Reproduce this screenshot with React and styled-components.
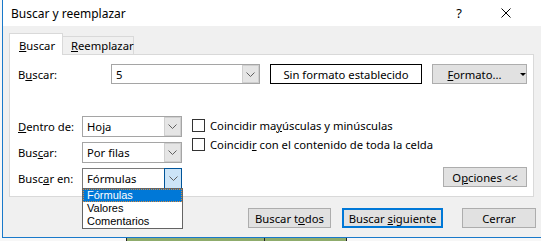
import React from "react";
import styled, { createGlobalStyle } from "styled-components";

const Global = createGlobalStyle`
  body {
    margin: 0;
    background: #fff;
    font-family: "Noto Sans", "Open Sans", sans-serif;
    font-size: 11.25px;
    color: #000;
  }
`;

const Screen = styled.div`
  width: 541px;
  height: 241px;
  overflow: hidden;
  background: #f7f7f7;
`;

const Dialog = styled.div`
  margin-left: 2px;
  width: 539px;
  height: 238px;
  box-sizing: border-box;
  border-left: 1px solid #1979ca;
  border-bottom: 1px solid #1979ca;
  background: #f0f0f0;
  display: flex;
  flex-direction: column;
`;

const TitleBar = styled.div`
  height: 26px;
  flex: none;
  background: #fff;
  display: flex;
  align-items: center;
  padding-left: 8px;
  font-size: 12px;
`;

const Title = styled.span`
  flex: 1;
`;

const TitleIcon = styled.span`
  width: ${(p) => p.$w}px;
  display: flex;
  justify-content: center;
  align-items: center;
  font-size: 13px;
`;

const Tabs = styled.div`
  display: flex;
  align-items: flex-end;
  margin-top: 7px;
  padding-left: 6px;
  position: relative;
  z-index: 2;
`;

const Tab = styled.div`
  box-sizing: border-box;
  height: ${(p) => (p.$active ? 22 : 19)}px;
  width: ${(p) => p.$w}px;
  padding-left: ${(p) => (p.$active ? 9 : 8)}px;
  background: ${(p) => (p.$active ? "#fff" : "#f0f0f0")};
  border: 1px solid #d9d9d9;
  border-bottom: ${(p) => (p.$active ? "none" : "1px solid #d9d9d9")};
  border-left: ${(p) => (p.$active ? "1px solid #d9d9d9" : "none")};
  display: flex;
  align-items: center;
  white-space: nowrap;
  padding-top: ${(p) => (p.$active ? 1 : 0)}px;
`;

const Panel = styled.div`
  margin: -1px 0 0 6px;
  width: 525px;
  height: 143px;
  box-sizing: border-box;
  border: 1px solid #d9d9d9;
  background: #fff;
  padding: 9px 6px 0 8px;
  position: relative;
  z-index: 1;
`;

const TopRow = styled.div`
  display: flex;
  align-items: center;
  height: 20px;
`;

const Label = styled.span`
  width: ${(p) => p.$w}px;
  flex: none;
`;

const Combo = styled.div`
  position: relative;
  display: flex;
  flex: none;
  width: ${(p) => p.$w}px;
  height: ${(p) => p.$h}px;
  box-sizing: border-box;
  border: 1px solid ${(p) => (p.$focus ? "#7a7a7a" : "#a5a5a5")};
  background: #fff;
`;

const ComboValue = styled.span`
  flex: 1;
  display: flex;
  align-items: center;
  padding-left: 4px;
`;

const ComboArrow = styled.span`
  box-sizing: border-box;
  display: flex;
  align-items: center;
  justify-content: center;
  background: ${(p) => (p.$focus ? "#cce4f7" : "#e5e5e5")};
  border: 1px solid ${(p) => (p.$focus ? "#005499" : "#cfcfcf")};
  margin: ${(p) => (p.$focus ? "-1px -1px -1px 0" : "0")};
  width: ${(p) => (p.$focus ? 18 : 17)}px;
`;

const FormatBox = styled.div`
  margin-left: 10px;
  width: 152px;
  height: 20px;
  box-sizing: border-box;
  border: 1px solid #000;
  display: flex;
  align-items: center;
  justify-content: center;
`;

const Btn = styled.button`
  flex: none;
  width: ${(p) => p.$w}px;
  height: 20px;
  margin-left: ${(p) => p.$ml || 0}px;
  box-sizing: border-box;
  border: ${(p) => (p.$primary ? "2px solid #0078d7" : "1px solid #adadad")};
  background: #e1e1e1;
  font: inherit;
  color: #000;
  padding: 0;
  display: flex;
  align-items: center;
  justify-content: center;
  white-space: nowrap;
`;

const Caret = styled.span`
  width: 0;
  height: 0;
  border-left: 3px solid transparent;
  border-right: 3px solid transparent;
  border-top: 3px solid #000;
  margin-left: 18px;
`;

const U = styled.span`
  text-decoration: underline;
  text-underline-offset: 1px;
`;

const Lower = styled.div`
  display: flex;
  margin-top: 32px;
  height: 72px;
`;

const Fields = styled.div`
  display: flex;
  flex-direction: column;
  gap: 5px;
`;

const FieldRow = styled.div`
  display: flex;
  align-items: center;
`;

const Checks = styled.div`
  display: flex;
  flex-direction: column;
  gap: 6px;
  margin: 3px 0 0 10px;
  flex: 1;
`;

const CheckRow = styled.label`
  display: flex;
  align-items: center;
  gap: 5px;
  height: 13px;
`;

const Box = styled.span`
  width: 13px;
  height: 13px;
  box-sizing: border-box;
  border: 1px solid #333;
  background: #fff;
  flex: none;
`;

const OptionsBtn = styled(Btn)`
  align-self: flex-end;
  margin-bottom: 1px;
`;

const Menu = styled.div`
  position: absolute;
  top: 100%;
  left: -1px;
  width: 101px;
  box-sizing: border-box;
  border: 1px solid #646464;
  background: #fff;
  z-index: 5;
  font-family: "Liberation Sans", Arial, sans-serif;
  font-size: 11px;
`;

const MenuItem = styled.div`
  height: 13px;
  line-height: 11px;
  padding-left: 3px;
  box-sizing: border-box;
  background: ${(p) => (p.$sel ? "#0078d7" : "transparent")};
  color: ${(p) => (p.$sel ? "#fff" : "#000")};
  border: 1px dotted ${(p) => (p.$sel ? "#d88a3c" : "transparent")};
`;

const Footer = styled.div`
  display: flex;
  margin-top: 11px;
  padding-left: 245px;
`;

const Sheet = styled.div`
  display: flex;
  height: 3px;
`;

const Cell = styled.div`
  width: ${(p) => p.$w}px;
  background: ${(p) => p.$bg};
  border-right: ${(p) => (p.$line ? "1px solid #222" : "none")};
`;

const Chevron = () => (
  <svg width="9" height="5" viewBox="0 0 9 5">
    <polyline points="0.5,0.5 4.5,4.5 8.5,0.5" fill="none" stroke="#606060" strokeWidth="1" />
  </svg>
);

const Close = () => (
  <svg width="10" height="10" viewBox="0 0 10 10">
    <path d="M0.5 0.5L9.5 9.5M9.5 0.5L0.5 9.5" stroke="#000" strokeWidth="1" />
  </svg>
);

const Select = ({ label, value, focus, children }) => (
  <FieldRow>
    <Label $w={64}>{label}</Label>
    <Combo $w={100} $h={21} $focus={focus}>
      <ComboValue>{value}</ComboValue>
      <ComboArrow $focus={focus}>
        <Chevron />
      </ComboArrow>
      {children}
    </Combo>
  </FieldRow>
);

export default function App() {
  return (
    <Screen>
      <Global />
      <Dialog>
        <TitleBar>
          <Title>Buscar y reemplazar</Title>
          <TitleIcon $w={14}>?</TitleIcon>
          <TitleIcon $w={35} />
          <TitleIcon $w={10}>
            <Close />
          </TitleIcon>
          <TitleIcon $w={30} />
        </TitleBar>

        <Tabs>
          <Tab $active $w={54}>
            <span><U>B</U>uscar</span>
          </Tab>
          <Tab $w={71}>
            <span><U>R</U>eemplazar</span>
          </Tab>
        </Tabs>

        <Panel>
          <TopRow>
            <Label $w={93}>B<U>u</U>scar:</Label>
            <Combo $w={149} $h={20}>
              <ComboValue>5</ComboValue>
              <ComboArrow>
                <Chevron />
              </ComboArrow>
            </Combo>
            <FormatBox>Sin formato establecido</FormatBox>
            <Btn $w={95} $ml={10}>
              <span style={{ marginLeft: 14 }}><U>F</U>ormato...</span>
              <Caret />
            </Btn>
          </TopRow>

          <Lower>
            <Fields>
              <Select label={<><U>D</U>entro de:</>} value="Hoja" />
              <Select label={<>Bus<U>c</U>ar:</>} value="Por filas" />
              <Select label={<>Busc<U>a</U>r en:</>} value="Fórmulas" focus>
                <Menu>
                  <MenuItem $sel>Fórmulas</MenuItem>
                  <MenuItem>Valores</MenuItem>
                  <MenuItem>Comentarios</MenuItem>
                </Menu>
              </Select>
            </Fields>
            <Checks>
              <CheckRow>
                <Box />
                <span>Coincidir ma<U>y</U>úsculas y minúsculas</span>
              </CheckRow>
              <CheckRow>
                <Box />
                <span>Coincidi<U>r</U> con el contenido de toda la celda</span>
              </CheckRow>
            </Checks>
            <OptionsBtn $w={84}>
              <span>O<U>p</U>ciones &lt;&lt;</span>
            </OptionsBtn>
          </Lower>
        </Panel>

        <Footer>
          <Btn $w={83}>
            <span>Buscar t<U>o</U>dos</span>
          </Btn>
          <Btn $w={101} $ml={11} $primary>
            <span>Buscar <U>s</U>iguiente</span>
          </Btn>
          <Btn $w={74} $ml={19}>
            <span>Cerrar</span>
          </Btn>
        </Footer>
      </Dialog>
      <Sheet>
        <Cell $w={126} $bg="#f7f7f7" $line />
        <Cell $w={138} $bg="#8fac6c" $line />
        <Cell $w={81} $bg="#8fac6c" $line />
        <Cell $w={195} $bg="#f7f7f7" />
      </Sheet>
    </Screen>
  );
}
